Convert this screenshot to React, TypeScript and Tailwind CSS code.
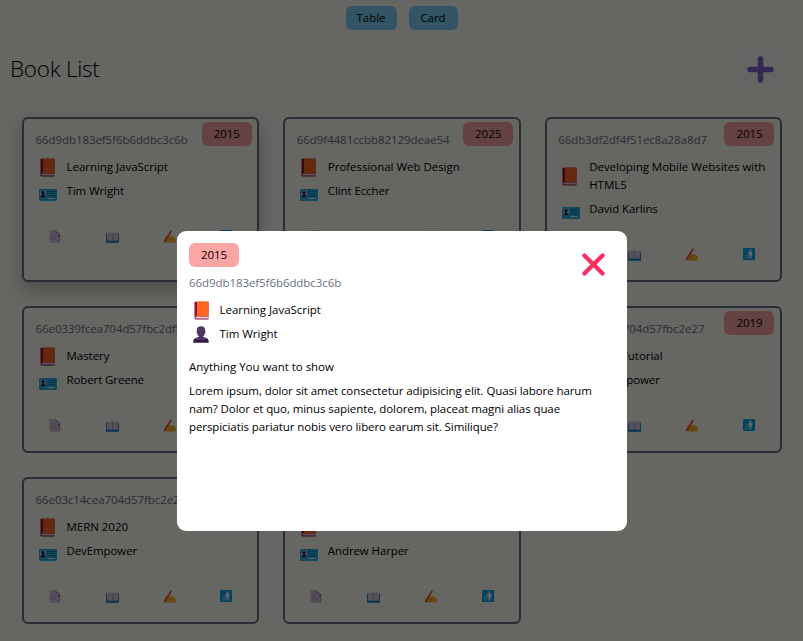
import React from "react";

type Book = { id: string; title: string; author: string; year: string; raised?: boolean };

const books: Book[] = [
  { id: "66d9db183ef5f6b6ddbc3c6b", title: "Learning JavaScript", author: "Tim Wright", year: "2015", raised: true },
  { id: "66d9f4481ccbb82129deae54", title: "Professional Web Design", author: "Clint Eccher", year: "2025" },
  { id: "66db3df2df4f51ec8a28a8d7", title: "Developing Mobile Websites with HTML5", author: "David Karlins", year: "2015" },
  { id: "66e0339fcea704d57fbc2df9", title: "Mastery", author: "Robert Greene", year: "2012" },
  { id: "66e03b0fcea704d57fbc2e11", title: "React Basics", author: "DevEmpower", year: "2018" },
  { id: "66e03f1fcea704d57fbc2e27", title: "React Tutorial", author: "DevEmpower", year: "2019" },
  { id: "66e03c14cea704d57fbc2e2d", title: "MERN 2020", author: "DevEmpower", year: "2020" },
  { id: "66e03c9ecea704d57fbc2e33", title: "Web", author: "Andrew Harper", year: "2021" },
];

function BookIcon() {
  return (
    <svg className="-my-px h-[19px] w-[15px] shrink-0" viewBox="0 0 15 19">
      <path d="M1 0.8H14.5V18.5H1.6Q0.5 18.3 0.5 17V1.5Z" fill="#990838" />
      <path d="M2.2 15.6H14.5V17.5H2.2Q1.4 17.3 1.4 16.5T2.2 15.6Z" fill="#e1d8ec" />
      <path d="M3 0.5H14Q14.6 0.5 14.6 1.1V15.6H3Z" fill="#ff6723" />
    </svg>
  );
}

function IdCardIcon() {
  return (
    <svg className="h-3 w-[18px] shrink-0" viewBox="0 0 18 12">
      <rect width="18" height="12" rx="1.2" fill="#26b4e4" />
      <rect x="1.2" y="1.5" width="5.8" height="7" fill="#83cbff" />
      <circle cx="4" cy="3.6" r="1.6" fill="#321b41" />
      <path d="M1.4 8.2Q1.6 6.2 3.3 5.9V4.5H4.7V5.9Q6.5 6.2 6.7 8.2Z" fill="#321b41" />
      <path d="M8.5 2.5H16.5M8.5 4.6H16.5M8.5 6.7H16.5" stroke="#0074ba" strokeWidth="0.8" />
      <path d="M8.5 9.5H15.5" stroke="#f4f4f4" strokeWidth="1" />
    </svg>
  );
}

function PersonIcon() {
  return (
    <svg className="h-[17px] w-4 shrink-0" viewBox="0 0 16 17">
      <path d="M0.3 16.7V15.5Q0.3 12.5 3 12L6 11V8.5H10V11L13 12Q15.7 12.5 15.7 15.5V16.7Z" fill="#321b41" />
      <path d="M2.3 12.3L6 11Q8 12.5 10 11L13.7 12.3L12 14H4Z" fill="#533566" />
      <path d="M3.8 3.7Q4.3 0.3 8 0.3T12.2 3.7V5.3Q12.9 6 12 7.2Q10.8 11.2 8 11.2T4 7.2Q3.1 6 3.8 5.3Z" fill="#533566" />
    </svg>
  );
}

function PagesIcon() {
  return (
    <svg className="h-[13px] w-3" viewBox="0 0 12 13">
      <path d="M2 2H9L11 4V12.6H2Z" fill="#b4a8c0" />
      <path d="M0.5 0.3H6.5L9.5 3.3V11.8H0.5Z" fill="#d3c6df" />
      <path d="M6.5 0.3V3.3H9.5Z" fill="#9b8caf" />
      <path d="M2 4.8H5.5M2 6.8H7.5M2 8.8H7.5" stroke="#998ea4" strokeWidth="0.7" />
      <path d="M9.5 5H11V6.6H9.5Z" fill="#ca0b7a" />
      <path d="M10.7 8.4H12V10H10.7Z" fill="#fcc33c" />
    </svg>
  );
}

function OpenBookIcon() {
  return (
    <svg className="mt-0.5 h-[11px] w-[13px]" viewBox="0 0 13 11">
      <rect y="1.5" width="13" height="9.2" rx="0.7" fill="#0084ce" />
      <path d="M0.8 0.5H5.5L6.5 1L7.5 0.5H12.2V8.8H0.8Z" fill="#d3cae1" />
      <path d="M6.5 1V9" stroke="#998ea4" strokeWidth="0.7" />
    </svg>
  );
}

function WritingIcon() {
  return (
    <svg className="h-[13px] w-[13px]" viewBox="0 0 13 13">
      <path d="M1.6 9Q3 5.4 6 5L7.2 6.6L9.3 6.2Q12.8 7.6 12.8 9.6V12.4H3.5Q1.2 11.4 1.6 9Z" fill="#ffb52e" />
      <path d="M5.5 9.3L8.2 8.9" stroke="#d67d00" strokeWidth="0.4" />
      <path d="M2 10.8L8 1.2" stroke="#f8512f" strokeWidth="1.6" strokeLinecap="round" />
      <path d="M0.8 12.8L1.2 10.5L2.7 11.4Z" fill="#7b3b4b" />
    </svg>
  );
}

function LitterIcon() {
  return (
    <svg className="h-3 w-3" viewBox="0 0 12 12">
      <rect width="12" height="12" rx="1.3" fill="#00a6ed" />
      <circle cx="7.4" cy="2.2" r="1" fill="#fff" />
      <path d="M6.2 3.5H8.5Q9.4 3.6 9.4 4.4V7H8.6V10.6H7.7V7.7H7.2V10.6H6.3V5.3L5.2 6.6L4.4 6Z" fill="#fff" />
      <path d="M2.3 7.4H5L4.6 10.3H2.7Z" fill="none" stroke="#fff" strokeOpacity="0.8" strokeWidth="0.6" />
    </svg>
  );
}

function YearBadge({ year }: { year: string }) {
  return (
    <span className="flex h-6 w-[50px] items-center justify-center rounded-md bg-[#fca5a5]">{year}</span>
  );
}

function BookCard({ book }: { book: Book }) {
  return (
    <article
      className={
        book.raised
          ? "relative rounded-md border-2 border-gray-500 px-[11.5px] pt-3 pb-[17px] shadow-[0_8px_18px_rgba(0,0,0,0.25)]"
          : "relative rounded-md border-2 border-gray-500 px-[11.5px] pt-3 pb-[17px]"
      }
    >
      <div className="absolute top-[3px] right-[5.5px]">
        <YearBadge year={book.year} />
      </div>
      <p className="tracking-[-0.07px] text-gray-500">{book.id}</p>
      <div className="mt-[9px] flex items-center">
        <span className="flex w-[31px] shrink-0 pl-1">
          <BookIcon />
        </span>
        <h2>{book.title}</h2>
      </div>
      <div className="mt-1.5 flex h-[18px] items-center tracking-[-0.1px]">
        <span className="flex w-[31px] shrink-0 pt-2 pl-[3.5px]">
          <IdCardIcon />
        </span>
        <h2>{book.author}</h2>
      </div>
      <div className="-mx-[9px] mt-[27px] grid h-[18px] grid-cols-4 place-items-center">
        <PagesIcon />
        <OpenBookIcon />
        <WritingIcon />
        <LitterIcon />
      </div>
    </article>
  );
}

function BookModal({ book }: { book: Book }) {
  return (
    <div className="fixed inset-0 flex items-start justify-center bg-black/60 pt-[231px] pl-px">
      <section className="h-[300px] w-[450px] rounded-[9px] bg-white p-3">
        <div className="flex h-6 justify-between">
          <YearBadge year={book.year} />
          <svg className="mt-2.5 mr-2.5 h-[23px] w-[23px]" viewBox="0 0 23 23">
            <path d="M2.4 2.4L20.6 20.6M20.6 2.4L2.4 20.6" stroke="#f92f60" strokeWidth="4.2" strokeLinecap="round" />
          </svg>
        </div>
        <p className="mt-[7px] tracking-[-0.07px] text-gray-500">{book.id}</p>
        <div className="mt-[9px] flex h-[18px] items-center">
          <span className="flex w-[30.5px] pl-[5px]">
            <BookIcon />
          </span>
          <h2>{book.title}</h2>
        </div>
        <div className="mt-1.5 flex h-[18px] items-center">
          <span className="flex w-[30.5px] pl-1">
            <PersonIcon />
          </span>
          <h2>{book.author}</h2>
        </div>
        <p className="mt-[15px]">Anything You want to show</p>
        <p className="mt-1.5 tracking-[-0.085px]">
          Lorem ipsum, dolor sit amet consectetur adipisicing elit. Quasi labore harum
          <br />
          nam? Dolor et quo, minus sapiente, dolorem, placeat magni alias quae
          <br />
          perspiciatis pariatur nobis vero libero earum sit. Similique?
        </p>
      </section>
    </div>
  );
}

export default function App() {
  return (
    <div className="h-[641px] overflow-hidden bg-[#fffef8] font-['Open_Sans','Noto_Sans',sans-serif] text-[11.5px] leading-[18px] tracking-[-0.03px] text-black">
      <nav className="flex justify-center gap-3 pt-1.5">
        <button className="h-6 w-[51px] rounded-md bg-[#7dd3fc]">Table</button>
        <button className="h-6 w-[49px] rounded-md bg-[#7dd3fc]">Card</button>
      </nav>
      <header className="mt-[15px] flex h-[45px] items-center justify-between pr-[11px] pl-[10px]">
        <h1 className="pt-0.5 text-[22.5px] leading-7 font-[350] tracking-[-0.25px]">Book List</h1>
        <button className="flex h-[45px] w-16 items-center justify-center rounded-md bg-[#f8fff8] pt-1">
          <svg className="h-[27px] w-[27px]" viewBox="0 0 27 27">
            <path d="M13.5 3V24M3 13.5H24" stroke="#8062d0" strokeWidth="5.5" strokeLinecap="round" />
          </svg>
        </button>
      </header>
      <main className="mt-[27px] grid grid-cols-3 gap-6 pr-[21px] pl-[22px]">
        {books.map((b) => (
          <BookCard key={b.id} book={b} />
        ))}
      </main>
      <BookModal book={books[0]} />
    </div>
  );
}
